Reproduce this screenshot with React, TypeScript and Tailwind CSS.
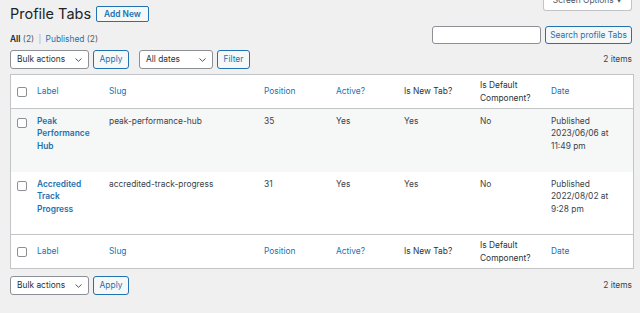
const rows = [
  {
    id: 1,
    label: "Peak Performance Hub",
    slug: "peak-performance-hub",
    position: 35,
    active: "Yes",
    newTab: "Yes",
    isDefault: "No",
    date: "2023/06/06 at",
    time: "11:49 pm",
  },
  {
    id: 2,
    label: "Accredited Track Progress",
    slug: "accredited-track-progress",
    position: 31,
    active: "Yes",
    newTab: "Yes",
    isDefault: "No",
    date: "2022/08/02 at",
    time: "9:28 pm",
  },
]

function Chevron() {
  return (
    <svg width="7" height="4" viewBox="0 0 7 4" className="ml-auto mr-[6px]">
      <path d="M0.5 0.5 L3.5 3.3 L6.5 0.5" fill="none" stroke="#50575e" strokeWidth="1" />
    </svg>
  )
}

function Select({ label, width }: { label: string; width: string }) {
  return (
    <div className={`${width} h-[19px] flex items-center bg-white border border-[#8c8f94] rounded-[3px] pl-[6px] text-[#2c3338]`}>
      {label}
      <Chevron />
    </div>
  )
}

function Button({ children, width }: { children: React.ReactNode; width: string }) {
  return (
    <button className={`${width} h-[19px] flex items-center justify-center bg-[#f6f7f7] border border-[#2271b1] rounded-[3px] text-[#2271b1]`}>
      {children}
    </button>
  )
}

function Checkbox() {
  return <span className="block w-[10px] h-[10px] bg-white border border-[#8c8f94] rounded-[2px]" />
}

function HeaderRow({ foot }: { foot?: boolean }) {
  const border = foot ? "border-t border-[#c3c4c7]" : "border-b border-[#c3c4c7]"
  return (
    <tr>
      <th className={`${border} h-[34px] pl-[6px] align-middle`}>
        <Checkbox />
      </th>
      <th className={`${border} pl-[6px] text-left font-normal text-[#2271b1]`}>Label</th>
      <th className={`${border} pl-[7px] text-left font-normal text-[#2271b1]`}>Slug</th>
      <th className={`${border} pl-[7px] text-left font-normal text-[#2271b1]`}>Position</th>
      <th className={`${border} pl-[7px] text-left font-normal text-[#2271b1]`}>Active?</th>
      <th className={`${border} pl-[7px] text-left font-normal text-[#2c3338]`}>Is New Tab?</th>
      <th className={`${border} pl-[7px] text-left font-normal text-[#2c3338]`}>
        Is Default
        <br />
        Component?
      </th>
      <th className={`${border} pl-[7px] text-left font-normal text-[#2271b1]`}>Date</th>
    </tr>
  )
}

export default function App() {
  return (
    <div
      className="w-[640px] h-[313px] overflow-hidden bg-[#f0f0f1] px-[10px] pr-[8px] text-[8.4px] leading-[12.4px] text-[#3c434a]"
      style={{ fontFamily: "Inter, 'Noto Sans', sans-serif" }}
    >
      <div className="flex justify-between items-start h-[22px]">
        <div className="flex items-center mt-[6px] h-[16px] gap-[5px]">
          <h1 className="text-[14.5px] leading-[16px] text-[#1d2327]">Profile Tabs</h1>
          <button className="h-[16px] px-[7px] bg-[#f6f7f7] border border-[#2271b1] rounded-[2px] text-[#2271b1] font-semibold">
            Add New
          </button>
        </div>
        <div className="w-[89px] h-[11px] overflow-hidden bg-white border border-t-0 border-[#c3c4c7] rounded-b-[3px] flex justify-center text-[#50575e]">
          <span className="-mt-[6px] leading-[12px]">
            Screen Options <span className="text-[6px] align-middle">▼</span>
          </span>
        </div>
      </div>

      <div className="flex justify-between items-end mt-[4px] h-[18px]">
        <div className="leading-[10px] text-[#50575e]">
          <span className="font-semibold text-[#1d2327]">All</span> (2){" "}
          <span className="text-[#a7aaad] mx-[2px]">|</span>{" "}
          <span className="text-[#2271b1]">Published</span> (2)
        </div>
        <div className="flex gap-[4px] h-[18px]">
          <div className="w-[109px] h-[18px] bg-white border border-[#8c8f94] rounded-[3px]" />
          <button className="w-[87px] h-[18px] flex items-center justify-center bg-[#f6f7f7] border border-[#2271b1] rounded-[3px] text-[#2271b1]">
            Search profile Tabs
          </button>
        </div>
      </div>

      <div className="flex items-center mt-[6px] h-[19px]">
        <Select label="Bulk actions" width="w-[79px]" />
        <div className="ml-[4px]">
          <Button width="w-[36px]">Apply</Button>
        </div>
        <div className="ml-[10px]">
          <Select label="All dates" width="w-[74px]" />
        </div>
        <div className="ml-[4px]">
          <Button width="w-[33px]">Filter</Button>
        </div>
        <span className="ml-auto">2 items</span>
      </div>

      <table className="mt-[5px] w-[622px] table-fixed border-separate border-spacing-0 bg-white border border-[#c3c4c7]">
        <colgroup>
          <col className="w-[20px]" />
          <col className="w-[71px]" />
          <col className="w-[155px]" />
          <col className="w-[72px]" />
          <col className="w-[68px]" />
          <col className="w-[76px]" />
          <col className="w-[71px]" />
          <col className="w-[89px]" />
        </colgroup>
        <thead>
          <HeaderRow />
        </thead>
        <tbody>
          {rows.map((row, i) => (
            <tr key={row.id} className={i % 2 === 0 ? "bg-[#f6f7f7] h-[63px]" : "bg-white h-[62px]"}>
              <td className="align-top pl-[6px] pt-[9px]">
                <Checkbox />
              </td>
              <td className="align-top pl-[6px] pt-[6px] pr-[6px] font-semibold text-[#2271b1]">{row.label}</td>
              <td className="align-top pl-[7px] pt-[6px]">{row.slug}</td>
              <td className="align-top pl-[7px] pt-[6px]">{row.position}</td>
              <td className="align-top pl-[7px] pt-[6px]">{row.active}</td>
              <td className="align-top pl-[7px] pt-[6px]">{row.newTab}</td>
              <td className="align-top pl-[7px] pt-[6px]">{row.isDefault}</td>
              <td className="align-top pl-[7px] pt-[6px]">
                Published
                <br />
                {row.date}
                <br />
                {row.time}
              </td>
            </tr>
          ))}
        </tbody>
        <tfoot>
          <HeaderRow foot />
        </tfoot>
      </table>

      <div className="flex items-center mt-[7px] h-[19px]">
        <Select label="Bulk actions" width="w-[79px]" />
        <div className="ml-[4px]">
          <Button width="w-[36px]">Apply</Button>
        </div>
        <span className="ml-auto">2 items</span>
      </div>
    </div>
  )
}
